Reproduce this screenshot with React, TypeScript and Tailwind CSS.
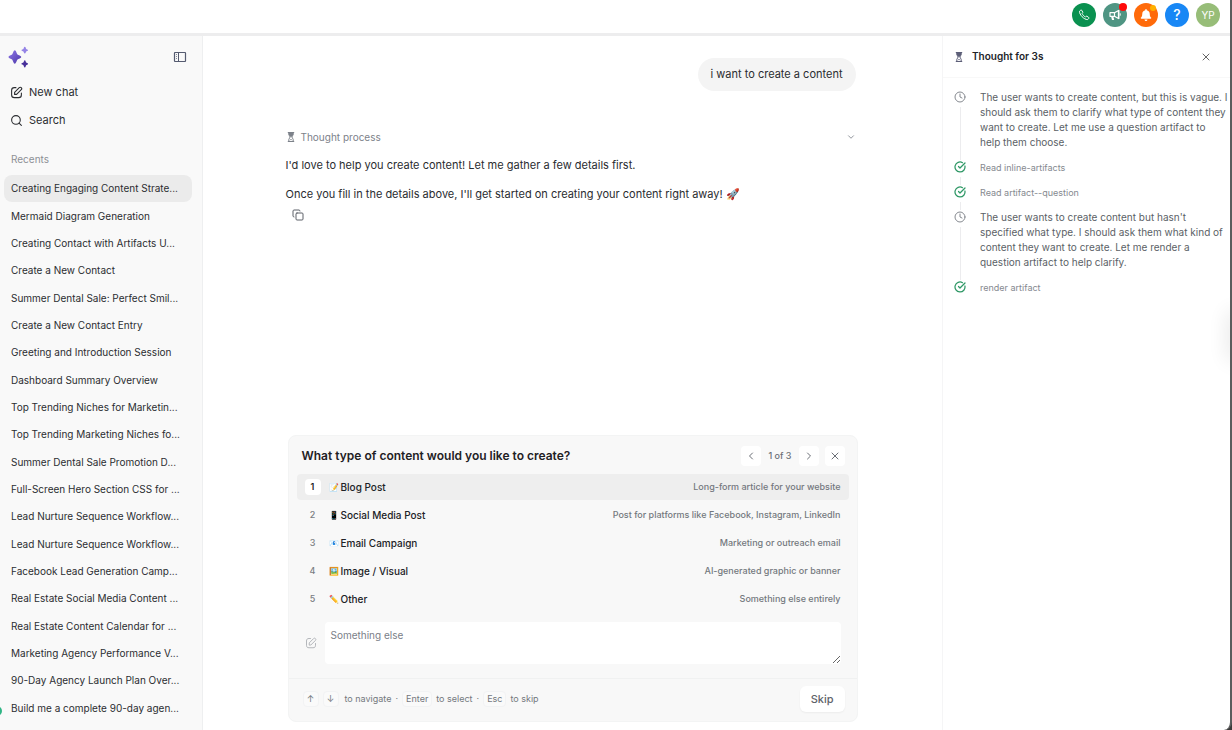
import React, { useState } from "react";
import { ChevronDown, ChevronLeft, ChevronRight, CircleCheckBig, Clock, Copy, Search, X } from "lucide-react";
import { FaBell } from "react-icons/fa";

const chats = [
  "Creating Engaging Content Strate...",
  "Mermaid Diagram Generation",
  "Creating Contact with Artifacts U...",
  "Create a New Contact",
  "Summer Dental Sale: Perfect Smil...",
  "Create a New Contact Entry",
  "Greeting and Introduction Session",
  "Dashboard Summary Overview",
  "Top Trending Niches for Marketin...",
  "Top Trending Marketing Niches fo...",
  "Summer Dental Sale Promotion D...",
  "Full-Screen Hero Section CSS for ...",
  "Lead Nurture Sequence Workflow...",
  "Lead Nurture Sequence Workflow...",
  "Facebook Lead Generation Camp...",
  "Real Estate Social Media Content ...",
  "Real Estate Content Calendar for ...",
  "Marketing Agency Performance V...",
  "90-Day Agency Launch Plan Over...",
  "Build me a complete 90-day agen...",
];

const options = [
  { emoji: "📝", label: "Blog Post", hint: "Long-form article for your website" },
  { emoji: "📱", label: "Social Media Post", hint: "Post for platforms like Facebook, Instagram, LinkedIn" },
  { emoji: "📧", label: "Email Campaign", hint: "Marketing or outreach email" },
  { emoji: "🖼️", label: "Image / Visual", hint: "AI-generated graphic or banner" },
  { emoji: "✏️", label: "Other", hint: "Something else entirely" },
];

const steps = [
  {
    kind: "thought",
    text: "The user wants to create content, but this is vague. I\nshould ask them to clarify what type of content they\nwant to create. Let me use a question artifact to\nhelp them choose.",
  },
  { kind: "done", text: "Read inline-artifacts" },
  { kind: "done", text: "Read artifact--question" },
  {
    kind: "thought",
    text: "The user wants to create content but hasn't\nspecified what type. I should ask them what kind of\ncontent they want to create. Let me render a\nquestion artifact to help clarify.",
  },
  { kind: "done", text: "render artifact" },
];

function EditIcon({ className }: { className: string }) {
  return (
    <svg viewBox="0 0 24 24" fill="none" stroke="currentColor" strokeWidth="2" strokeLinecap="round" strokeLinejoin="round" className={className} aria-hidden="true">
      <path d="M11 3H8C4.5 3 3 4.500 3 8v8.500C3 20 4.500 21.500 8 21.500h8c3.500 0 5-1.500 5-5V13" />
      <path d="M8.500 15.500v-3.700l8.600-8.600a2.600 2.600 0 0 1 3.700 3.700l-8.600 8.600z" />
    </svg>
  );
}

function PhoneIcon() {
  return (
    <svg viewBox="0 0 12 12" fill="none" stroke="currentColor" strokeWidth="1" strokeLinejoin="round" className="size-3" aria-hidden="true">
      <path d="M2.700 1.200 1.500 2.300C1.200 5.500 6 10.700 9.600 10.600l1.200-1.200c.3-.4.2-.8-.2-1L9 7.300c-.4-.2-.7-.1-1 .2l-.5.5C6 7.300 4.700 5.900 4.100 4.500l.5-.6c.2-.3.3-.6.1-.9L3.700 1.300c-.3-.4-.7-.4-1-.1Z" />
    </svg>
  );
}

function MegaphoneIcon() {
  return (
    <svg viewBox="0 0 12 12" fill="none" stroke="currentColor" strokeLinejoin="round" className="size-3" aria-hidden="true">
      <path d="M1 3.700h4.500v3.600H1z" strokeWidth="1.200" />
      <path d="M5.500 3.700 9.500 1.500v8L5.500 7.300" strokeWidth="1.300" />
      <path d="M9 1h1.400v9H9zM2 7.300h2.300l.9 3.700H3z" fill="currentColor" stroke="none" />
      <path d="M11.200 4.300v2.400" />
    </svg>
  );
}

function PanelIcon() {
  return (
    <svg viewBox="0 0 14 12" fill="none" stroke="currentColor" className="h-3 w-3.5" aria-hidden="true">
      <rect x="1.500" y="1.500" width="11" height="9" rx="0.500" strokeWidth="1.200" />
      <path d="M5.500 1.500v9" />
      <path d="M3 3.500h1M3 5.500h1M3 7.500h1" strokeWidth="0.700" />
    </svg>
  );
}

function Hourglass() {
  return (
    <svg viewBox="0 0 10 12" fill="none" stroke="currentColor" className="h-3 w-2.5 shrink-0" aria-hidden="true">
      <path d="M1.800 1.500h6.400M1.800 10.500h6.400" />
      <path d="M2.800 1.500v2C2.800 4.700 4.200 5.200 4.200 6S2.800 7.300 2.800 8.500v2M7.200 1.500v2C7.200 4.700 5.800 5.200 5.800 6s1.400 1.300 1.400 2.500v2" />
      <path d="M2.800 1.500h4.400v2.200L5.800 5.800H4.200L2.800 3.700z" fill="currentColor" stroke="none" />
      <path d="M3.800 9.200 5 8.200l1.200 1" strokeWidth="0.700" />
    </svg>
  );
}

function Sparkles() {
  return (
    <svg viewBox="0 0 20 22" className="h-[22px] w-5" aria-hidden="true">
      <defs>
        <linearGradient id="spark" x1="0" y1="0" x2="1" y2="1">
          <stop offset="0" stopColor="#8f78e8" />
          <stop offset="1" stopColor="#4a35a8" />
        </linearGradient>
      </defs>
      <path d="M6.800 4.300C8 4.300 8.700 7.700 9.500 8.500S13.300 9.800 13.300 11s-3 1.700-3.800 2.500S8 17.700 6.800 17.700s-1.900-3.400-2.700-4.200S.4 12.200.4 11s2.900-1.700 3.700-2.500S5.600 4.300 6.800 4.300Z" fill="url(#spark)" />
      <path d="M16.800.8c.9 0 .9 1.600 1.400 2.100s1.900.5 1.900 1.300-1.400.8-1.900 1.300-.5 2.100-1.400 2.100-.9-1.600-1.400-2.100-1.900-.5-1.900-1.300 1.400-.8 1.900-1.300.5-2.100 1.400-2.100Z" fill="#9584e6" />
      <path d="M16.800 14.200c.9 0 .9 1.700 1.400 2.200s1.900.6 1.900 1.400-1.400.9-1.900 1.400-.5 2.200-1.400 2.200-.9-1.700-1.400-2.200-2.100-.6-2.100-1.400 1.600-.9 2.100-1.400.5-2.200 1.400-2.200Z" fill="#47309a" />
    </svg>
  );
}

function Key({ children }: { children: React.ReactNode }) {
  return (
    <kbd className="flex h-4 min-w-4 items-center justify-center rounded border border-[#f2f3f4] bg-[#fafafa] px-[3px] font-[Inter,sans-serif]">
      {children}
    </kbd>
  );
}

function Header() {
  const round = "relative flex size-6 items-center justify-center rounded-full text-white";
  return (
    <header className="flex h-9 shrink-0 items-start justify-end gap-[7px] border-b-3 border-[#ededee] pt-[3px] pr-2.5">
      <button aria-label="Call" className={`${round} bg-[#0a9150]`}>
        <PhoneIcon />
      </button>
      <button aria-label="Announcements" className={`${round} bg-[#4f9583]`}>
        <MegaphoneIcon />
        <span className="absolute top-0 right-0 size-2 rounded-full bg-[#ff0a0a]" />
      </button>
      <button aria-label="Notifications" className={`${round} bg-[#ff6a0a]`}>
        <FaBell className="size-3" />
        <span className="absolute top-0.5 right-0.5 size-1.5 rounded-full bg-[#ffb000]" />
      </button>
      <button aria-label="Help" className={`${round} bg-[#1887f5] text-sm font-medium`}>?</button>
      <button aria-label="Account" className={`${round} bg-[#97bd78] text-[10px]`}>YP</button>
    </header>
  );
}

function Sidebar() {
  return (
    <aside className="relative flex w-[203px] shrink-0 flex-col border-r border-[#eeeff0] bg-[#f9f9f9] text-[#2b2d31]">
      <div className="flex h-[42px] items-center justify-between pr-[15px] pl-2">
        <Sparkles />
        <button aria-label="Toggle sidebar" className="text-[#555b70]"><PanelIcon /></button>
      </div>
      <button className="flex h-7 items-center gap-1.5 px-2.5 text-[11px]"><EditIcon className="size-[13px]" />New chat</button>
      <button className="flex h-7 items-center gap-1.5 px-2.5 text-[11px]"><Search className="size-[13px]" />Search</button>
      <h2 className="flex h-[41px] items-end px-[11px] pb-2 text-[10px] text-[#8d9096]">Recents</h2>
      <nav className="grid min-h-0 flex-1 auto-rows-fr grid-cols-1 pr-2.5 pb-2 pl-1 text-[10px]">
        {chats.map((chat, i) => (
          <a
            key={i}
            href="#"
            className={i === 0 ? "flex items-center rounded-lg bg-[#ebebeb] px-[7px] whitespace-nowrap" : "flex items-center rounded-lg px-[7px] whitespace-nowrap"}
          >
            {chat}
          </a>
        ))}
      </nav>
      <span className="absolute bottom-3.5 -left-2 size-[10px] rounded-full bg-[#2fb585]" />
    </aside>
  );
}

function QuestionCard() {
  const [selected, setSelected] = useState(0);
  const pager = "flex size-5 items-center justify-center rounded bg-white";
  return (
    <section className="mr-0.5 ml-0.5 rounded-lg border border-[#f3f4f4] bg-[#f8f8f8]">
      <div className="flex h-[38px] items-center justify-between pt-px pr-3 pl-[13px]">
        <h2 className="text-xs font-semibold text-[#1f2124]">What type of content would you like to create?</h2>
        <div className="flex items-center text-[9px] font-medium text-[#6b6f76]">
          <button aria-label="Previous" className={pager}><ChevronLeft className="size-3" /></button>
          <span className="px-[7px]">1 of 3</span>
          <button aria-label="Next" className={pager}><ChevronRight className="size-3" /></button>
          <button aria-label="Close" className={`${pager} ml-1.5`}><X className="size-3" /></button>
        </div>
      </div>
      <div className="flex flex-col gap-0.5 px-2">
        {options.map((o, i) => (
          <button
            key={o.label}
            onClick={() => setSelected(i)}
            className={i === selected ? "flex h-[26px] items-center rounded bg-[#eeeeee] px-2 text-left" : "flex h-[26px] items-center rounded px-2 text-left"}
          >
            <span className={i === selected ? "flex size-4 items-center justify-center rounded bg-white text-[9px] font-semibold text-[#222]" : "flex size-4 items-center justify-center rounded text-[9px] font-medium text-[#7a7d82]"}>
              {i + 1}
            </span>
            <span className="ml-[7px] flex w-3 justify-center text-[8px]">{o.emoji}</span>
            <span className="ml-px text-[10px] font-medium text-[#202226]">{o.label}</span>
            <span className="ml-auto text-[9px] font-medium text-[#74787e]">{o.hint}</span>
          </button>
        ))}
      </div>
      <div className="flex items-center gap-2 px-4 pt-2.5 pb-3.5">
        <EditIcon className="size-3 text-[#b4b7bb]" />
        <textarea
          aria-label="Something else"
          placeholder="Something else"
          className="h-[42px] min-w-0 flex-1 resize-y rounded bg-white px-1.5 py-[5px] text-[10px] leading-4 placeholder:text-[#7b8088]"
        />
      </div>
      <div className="flex h-[43px] items-center justify-between border-t border-[#f0f1f1] pr-3 pb-0.5 pl-3.5 text-[9px] text-[#74787e]">
        <div className="flex items-center gap-1">
          <Key>↑</Key>
          <Key>↓</Key>
          <span className="pl-0.5">to navigate</span>
          <span>·</span>
          <Key>Enter</Key>
          <span>to select</span>
          <span>·</span>
          <Key>Esc</Key>
          <span>to skip</span>
        </div>
        <button className="h-[26px] rounded-md bg-white px-[11px] text-[11px] font-medium text-[#5f636a] shadow-xs">Skip</button>
      </div>
    </section>
  );
}

function Conversation() {
  return (
    <main className="flex min-w-0 flex-1 justify-center pb-2">
      <div className="flex w-full max-w-[574px] flex-col pt-[22px] text-[11px] text-[#2a2c30]">
        <p className="mr-1 self-end rounded-full bg-[#f4f4f4] px-[13px] py-2 leading-[17px]">i want to create a content</p>
        <button className="mt-[37px] flex h-[18px] items-center gap-[5px] pr-1 text-[10px] text-[#7d828a]">
          <Hourglass />
          Thought process
          <ChevronDown className="ml-auto size-2.5" />
        </button>
        <p className="mt-2.5 leading-[18px]">I'd love to help you create content! Let me gather a few details first.</p>
        <p className="mt-[11px] leading-[18px]">Once you fill in the details above, I'll get started on creating your content right away! 🚀</p>
        <button aria-label="Copy" className="mt-1.5 ml-1.5 self-start text-[#5c6068]"><Copy className="size-3" /></button>
        <div className="mt-auto"><QuestionCard /></div>
      </div>
    </main>
  );
}

function ThoughtPanel() {
  return (
    <aside className="relative w-[288px] shrink-0 overflow-hidden border-l border-[#f5f5f6]">
      <div className="flex h-[42px] items-center border-b border-[#f8f8f8] pr-[18px] pl-[11px]">
        <span className="text-[#5d5f78]"><Hourglass /></span>
        <h2 className="ml-2 text-[10px] font-semibold text-[#222428]">Thought for 3s</h2>
        <button aria-label="Close panel" className="ml-auto text-[#666]"><X className="size-3" /></button>
      </div>
      <ol className="flex flex-col pt-3 pl-[11px]">
        {steps.map((s, i) => (
          <li key={i} className="flex gap-[14px]">
            <div className="flex flex-col items-center gap-1 pt-px">
              {s.kind === "done" ? <CircleCheckBig className="size-3 shrink-0 text-[#2f9866]" strokeWidth={2.5} /> : <Clock className="size-3 shrink-0 text-[#85898f]" />}
              {i < steps.length - 1 && <span className="w-px flex-1 bg-[#ececee]" />}
            </div>
            <p className={s.kind === "done" ? "pb-2.5 text-[9px] leading-[15px] text-[#85898f]" : "pb-2.5 text-[10px] leading-[15px] whitespace-pre text-[#5b5f66]"}>{s.text}</p>
          </li>
        ))}
      </ol>
      <span className="absolute top-[276px] -right-2.5 h-12 w-2.5 rounded-full shadow-[0_0_20px_2px_#0000001c]" />
    </aside>
  );
}

export default function App() {
  return (
    <div className="h-screen bg-[#3a3a3a] font-[Inter,sans-serif]">
      <div className="flex h-full flex-col overflow-hidden rounded-br-lg border-r-2 border-[#5b5c5d] bg-white">
        <Header />
        <div className="flex min-h-0 flex-1">
          <Sidebar />
          <Conversation />
          <ThoughtPanel />
        </div>
      </div>
    </div>
  );
}
